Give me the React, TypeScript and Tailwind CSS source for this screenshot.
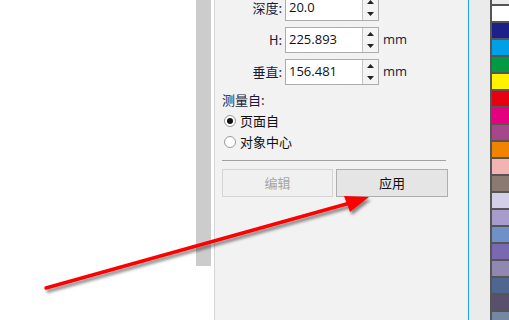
import React from 'react';

const swatches = [
  '#ececec',
  '#ffffff',
  '#1d2088',
  '#00a0e9',
  '#009944',
  '#fff100',
  '#e60012',
  '#e4007f',
  '#a7478b',
  '#f08300',
  '#f4b3b3',
  '#8a7a70',
  '#d2cfe6',
  '#a89ccb',
  '#7090c8',
  '#7a68b0',
  '#9088b0',
  '#4f6690',
  '#5b4f70',
  '#7487a3',
];

const cjk = { fontFamily: '"Noto Sans CJK SC", "Noto Sans", sans-serif' };
const num = { fontFamily: '"Open Sans", "Noto Sans", sans-serif' };

const SpinField: React.FC<{ value: string }> = ({ value }) => (
  <div className="flex h-[26px] w-[94px] border border-[#acacac] bg-white">
    <div className="flex flex-1 items-center pl-[3px] text-[13px] text-[#111]" style={num}>
      {value}
    </div>
    <div className="flex w-[16px] flex-col border-l border-[#c4c4c4] bg-[#f4f4f4]">
      <div className="flex flex-1 items-center justify-center">
        <svg width="7" height="4" viewBox="0 0 7 4">
          <path d="M3.5 0 L7 4 L0 4 Z" fill="#222" />
        </svg>
      </div>
      <div className="flex flex-1 items-center justify-center">
        <svg width="7" height="4" viewBox="0 0 7 4">
          <path d="M0 0 L7 0 L3.5 4 Z" fill="#222" />
        </svg>
      </div>
    </div>
  </div>
);

const Row: React.FC<{ label: string; value: string; unit?: boolean }> = ({ label, value, unit }) => (
  <div className="flex items-center">
    <div className="w-[63px] pr-[3px] text-right text-[13px] text-[#1a1a3a]" style={cjk}>
      {label}
    </div>
    <SpinField value={value} />
    {unit && (
      <span className="ml-[4px] text-[13px] text-[#1a1a3a]" style={num}>
        mm
      </span>
    )}
  </div>
);

const Radio: React.FC<{ label: string; checked?: boolean }> = ({ label, checked }) => (
  <div className="flex h-[21px] items-center">
    <div className="ml-[2px] flex h-[12px] w-[12px] items-center justify-center rounded-full border border-[#9a9a9a] bg-white">
      {checked && <div className="h-[6px] w-[6px] rounded-full bg-[#111]" />}
    </div>
    <span className="ml-[4px] text-[13px] text-[#111]" style={cjk}>
      {label}
    </span>
  </div>
);

export default function App() {
  return (
    <div className="relative flex h-[320px] w-[509px] overflow-hidden bg-white">
      <div className="w-[196px]" />
      <div className="w-[15px]">
        <div className="h-[266px] bg-[#cccccc]" />
      </div>
      <div className="w-[3px]" />
      <div className="w-[254px] border-l border-[#d6d6d6] bg-[#f2f2f2] pl-[7px]">
        <div className="-mt-[5px] flex flex-col gap-[6px]">
          <Row label="深度:" value="20.0" />
          <Row label="H:" value="225.893" unit />
          <Row label="垂直:" value="156.481" unit />
        </div>
        <div className="mt-[5px] text-[13px] leading-[20px] text-[#1a1a3a]" style={cjk}>
          测量自:
        </div>
        <Radio label="页面自" checked />
        <Radio label="对象中心" />
        <div className="mt-[8px] h-px w-[224px] bg-[#a0a0a0]" />
        <div className="mt-[8px] flex gap-[3px]">
          <div
            className="flex h-[28px] w-[111px] items-center justify-center border border-[#d4d4d4] bg-[#f0f0f0] text-[13px] text-[#a6a6a6]"
            style={cjk}
          >
            编辑
          </div>
          <div
            className="flex h-[28px] w-[112px] items-center justify-center border border-[#adadad] bg-[#e5e5e5] text-[13px] text-[#111]"
            style={cjk}
          >
            应用
          </div>
        </div>
      </div>
      <div className="w-[1px] bg-[#1e9ff0]" />
      <div className="w-[21px] bg-[#ebebeb]" />
      <div className="w-[19px] border-l-2 border-[#555555]">
        <div className="-mt-[13px] flex flex-col">
          {swatches.map((c, i) => (
            <div key={i} className="h-[17px] border-t-2 border-[#555555]" style={{ backgroundColor: c }} />
          ))}
        </div>
      </div>

      <svg className="pointer-events-none absolute left-0 top-0" width="509" height="320" viewBox="0 0 509 320">
        <defs>
          <filter id="sh" x="-10%" y="-10%" width="120%" height="140%">
            <feDropShadow dx="2" dy="3" stdDeviation="1.6" floodColor="#000" floodOpacity="0.45" />
          </filter>
        </defs>
        <g filter="url(#sh)">
          <line x1="46" y1="288" x2="350" y2="203" stroke="#ff0000" strokeWidth="3.5" strokeLinecap="round" />
          <path d="M369 197 L344 196 L350 212 Z" fill="#ff0000" />
        </g>
      </svg>
    </div>
  );
}
